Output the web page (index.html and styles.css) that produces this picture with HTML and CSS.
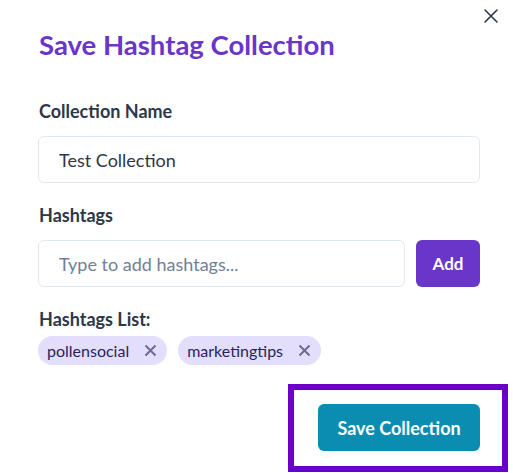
FILE: index.html
```html
<!DOCTYPE html>
<html lang="en">
<head>
<meta charset="utf-8">
<title>Save Hashtag Collection</title>
<link rel="stylesheet" href="styles.css">
</head>
<body>
<div class="modal">
  <button class="close" aria-label="Close">
    <svg viewBox="0 0 14 14" width="14" height="14"><path d="M1 1 L13 13 M13 1 L1 13" stroke="currentColor" stroke-width="1.6" fill="none" stroke-linecap="round"/></svg>
  </button>
  <h1 class="title">Save Hashtag Collection</h1>
  <div class="field">
    <label class="label">Collection Name</label>
    <input class="input" type="text" value="Test Collection">
  </div>
  <div class="field">
    <label class="label">Hashtags</label>
    <div class="row">
      <input class="input grow" type="text" placeholder="Type to add hashtags...">
      <button class="add">Add</button>
    </div>
  </div>
  <div class="list-label">Hashtags List:</div>
  <div class="tags">
    <span class="tag">pollensocial<svg class="tag-x" viewBox="0 0 13 13" width="13" height="13"><path d="M1.5 1.5 L11.5 11.5 M11.5 1.5 L1.5 11.5" stroke="currentColor" stroke-width="2" fill="none"/></svg></span>
    <span class="tag">marketingtips<svg class="tag-x" viewBox="0 0 13 13" width="13" height="13"><path d="M1.5 1.5 L11.5 11.5 M11.5 1.5 L1.5 11.5" stroke="currentColor" stroke-width="2" fill="none"/></svg></span>
  </div>
  <div class="footer">
    <div class="highlight">
      <button class="save">Save Collection</button>
    </div>
  </div>
</div>
</body>
</html>
```
FILE: styles.css
```css
html, body {
  margin: 0;
  background: #ffffff;
}
body {
  font-family: Lato, "Open Sans", sans-serif;
  color: #2d3748;
}
.modal {
  position: relative;
  padding: 28px 33px 0 38px;
}
.close {
  position: absolute;
  top: 8px;
  right: 14px;
  width: 16px;
  height: 16px;
  padding: 1px;
  border: 0;
  background: none;
  color: #2d3748;
  display: flex;
}
.title {
  margin: 0 0 38px 1px;
  font-size: 27.5px;
  line-height: 34px;
  font-weight: 700;
  color: #6a35c9;
}
.field {
  margin-bottom: 21px;
}
.label {
  display: block;
  margin: 0 0 14px 1px;
  font-size: 18px;
  line-height: 22px;
  font-weight: 700;
  color: #2d3748;
}
.input {
  display: block;
  box-sizing: border-box;
  width: 100%;
  height: 47px;
  padding: 0 20px;
  border: 1px solid #e2e8f0;
  border-radius: 6px;
  font-family: inherit;
  font-size: 18px;
  color: #2d3748;
  outline: none;
}
.input::placeholder {
  color: #718096;
}
.row {
  display: flex;
  gap: 11px;
}
.grow {
  flex: 1;
  width: auto;
}
.add {
  width: 64px;
  height: 47px;
  border: 0;
  border-radius: 6px;
  background: #6a35c9;
  color: #ffffff;
  font-family: inherit;
  font-size: 17px;
  font-weight: 700;
}
.list-label {
  margin: 0 0 6px 1px;
  font-size: 18px;
  line-height: 22px;
  font-weight: 700;
  color: #2d3748;
}
.tags {
  display: flex;
  gap: 11px;
}
.tag {
  display: inline-flex;
  align-items: center;
  height: 29px;
  padding: 0 10px 0 9px;
  border-radius: 15px;
  background: #e2defc;
  color: #2a1f5e;
  font-size: 16px;
}
.tag-x {
  margin-left: 15px;
  color: #6e6a92;
}
.footer {
  display: flex;
  justify-content: flex-end;
  margin: 19px -28px 0 0;
}
.highlight {
  border: 6px solid #6a00cc;
  padding: 14px 22px 15px 24px;
}
.save {
  display: block;
  width: 162px;
  height: 47px;
  border: 0;
  border-radius: 6px;
  background: #0a8db1;
  color: #ffffff;
  font-family: inherit;
  font-size: 18px;
  font-weight: 700;
}
```
